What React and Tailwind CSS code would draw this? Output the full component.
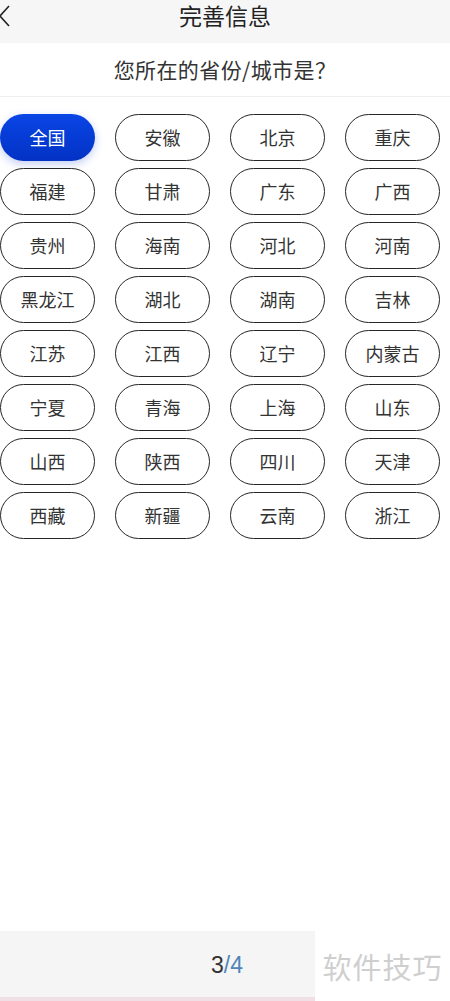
import React from "react";

const provinces = [
  "全国", "安徽", "北京", "重庆",
  "福建", "甘肃", "广东", "广西",
  "贵州", "海南", "河北", "河南",
  "黑龙江", "湖北", "湖南", "吉林",
  "江苏", "江西", "辽宁", "内蒙古",
  "宁夏", "青海", "上海", "山东",
  "山西", "陕西", "四川", "天津",
  "西藏", "新疆", "云南", "浙江",
];

const App = () => {
  const font = { fontFamily: '"Noto Sans CJK SC", "Noto Sans", sans-serif' };

  return (
    <div className="w-[450px] h-[1001px] flex flex-col bg-white overflow-hidden" style={font}>
      {/* header */}
      <div className="relative h-[43px] bg-[#f6f6f6] flex justify-center">
        <svg className="absolute left-[-2px] top-[4px]" width="14" height="24" viewBox="0 0 14 24">
          <path d="M11 2 L2 12 L11 22" fill="none" stroke="#222" strokeWidth="1.6" />
        </svg>
        <h1 className="text-[23px] leading-[30px] text-[#222]">完善信息</h1>
      </div>

      {/* question */}
      <div className="h-[54px] flex items-center justify-center border-b border-[#eeeeee]">
        <p className="text-[21px] text-[#333] tracking-[0.4px]">您所在的省份/城市是？</p>
      </div>

      {/* province grid */}
      <div className="grid grid-cols-[repeat(4,95px)] gap-x-[20px] gap-y-[7px] pt-[17px] pl-0">
        {provinces.map((p, i) =>
          i === 0 ? (
            <button
              key={p}
              className="h-[47px] rounded-full bg-gradient-to-b from-[#0a45e6] to-[#0332c4] text-white text-[18px] shadow-[0_3px_8px_rgba(10,60,220,0.25)]"
            >
              {p}
            </button>
          ) : (
            <button
              key={p}
              className="h-[47px] rounded-full border-[1.6px] border-[#262626] text-[#333] text-[18px] bg-white"
            >
              {p}
            </button>
          )
        )}
      </div>

      <div className="flex-1" />

      {/* footer */}
      <div className="h-[70px] flex">
        <div className="w-[315px] flex flex-col">
          <div className="flex-1 bg-[#f5f5f5] flex items-center justify-end pr-[72px] pt-[2px]">
            <span className="text-[23px] text-[#333]" style={{ fontFamily: '"Liberation Sans", sans-serif' }}>
              3<span className="text-[#4f86b8]">/4</span>
            </span>
          </div>
          <div className="h-[4px] bg-[#f0dfe4]" />
        </div>
        <div className="flex-1 bg-white mt-[2px] flex items-center justify-center">
          <span className="text-[29px] text-[#cfcfcf] tracking-[1px]">软件技巧</span>
        </div>
      </div>
    </div>
  );
};

export default App;
